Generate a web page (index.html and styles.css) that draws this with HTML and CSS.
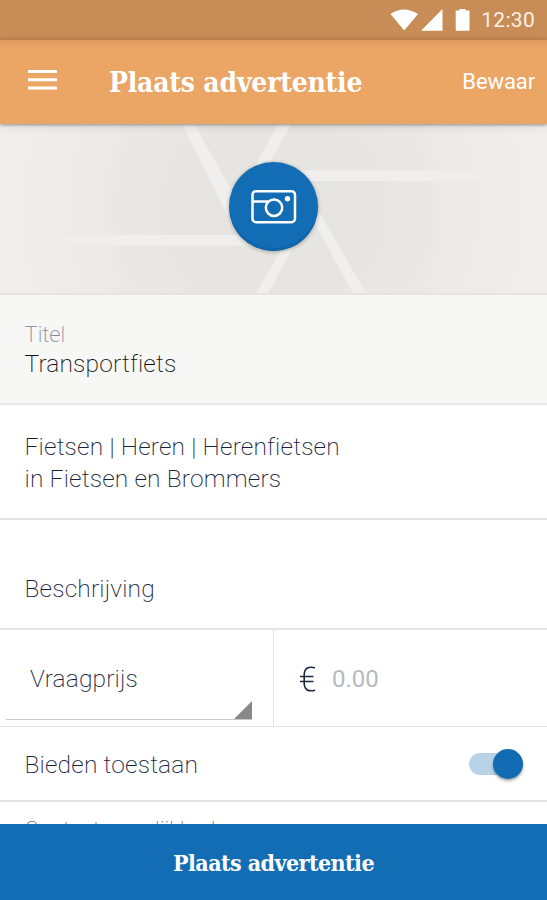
FILE: index.html
```html
<!DOCTYPE html>
<html lang="nl">
<head>
<meta charset="utf-8">
<title>Plaats advertentie</title>
<link rel="stylesheet" href="styles.css">
</head>
<body>
<div class="screen">
  <div class="status">
    <svg class="status-icons" width="82" height="24" viewBox="0 0 82 24">
      <path d="M.5 5Q13.800-4 28 5L14.200 21.500Z"/>
      <path d="M31 21.700L52.500 0V21.700Z"/>
      <path d="M65.700 1.400H69.500V0H75.500V1.400H79.500V21.700H65.700Z"/>
    </svg>
    <span class="clock">12:30</span>
  </div>
  <header class="bar">
    <svg class="burger" width="29" height="20" viewBox="0 0 29 20"><path d="M0 1.500H29M0 9.800H29M0 18.100H29"/></svg>
    <h1 class="slab bar-title">Plaats advertentie</h1>
    <span class="save">Bewaar</span>
  </header>
  <main class="form">
    <section class="photo">
      <svg class="roads" width="547" height="169" viewBox="0 0 547 169">
        <defs>
          <linearGradient id="left" gradientUnits="userSpaceOnUse" x1="10" x2="130"><stop offset="0" stop-color="#f0efed" stop-opacity="0"/><stop offset="1" stop-color="#f0efed"/></linearGradient>
          <linearGradient id="right" gradientUnits="userSpaceOnUse" x1="420" x2="530"><stop offset="0" stop-color="#f0efed"/><stop offset="1" stop-color="#f0efed" stop-opacity="0"/></linearGradient>
        </defs>
        <path fill="#f0efed" d="M182 0H194L240 81L228 93ZM278 0H291L268 42L254 44ZM311 92L319 88L366 169H353ZM280 128L293 124L268 169H256Z"/>
        <path fill="url(#left)" d="M0 111H255V121.500H0Z"/>
        <path fill="url(#right)" d="M290 46.500H547V57H290Z"/>
      </svg>
      <div class="camera">
        <svg width="46" height="36" viewBox="0 0 46 36" fill="none" stroke="#fff" stroke-width="2.500">
          <rect x="1.500" y="2.200" width="42.500" height="31" rx="3.500"/>
          <path d="M2 12.500H17"/><circle cx="23" cy="18.700" r="8.200"/>
          <circle cx="36.500" cy="9.800" r="2.700" fill="#fff" stroke="none"/>
        </svg>
      </div>
    </section>
    <section class="row title-row">
      <span class="label">Titel</span>
      <span class="value">Transportfiets</span>
    </section>
    <section class="row category">
      <span class="line1">Fietsen | Heren | Herenfietsen</span>
      <span class="line2">in Fietsen en Brommers</span>
    </section>
    <section class="row description"><span class="desc-text">Beschrijving</span></section>
    <section class="row price">
      <div class="kind">
        <div class="select"><span class="kind-text">Vraagprijs</span><svg class="corner" width="18" height="18" viewBox="0 0 18 18"><path d="M18 0V18H0Z"/></svg></div>
      </div>
      <div class="amount">
        <svg class="euro" width="16" height="26" viewBox="0 0 16 26"><path d="M15 1.800C8 0 4.200 2.500 4.200 9V17C4.200 23.500 8 26 15 24.200M0 10.500H13.500M0 15.500H13.500"/></svg>
        <span class="zero">0.00</span>
      </div>
    </section>
    <section class="row bids"><span class="bids-text">Bieden toestaan</span><div class="switch"><div class="knob"></div></div></section>
    <section class="contact"><span>Contactmogelijkheden</span></section>
  </main>
  <footer class="submit"><span class="slab submit-text">Plaats advertentie</span></footer>
</div>
</body>
</html>
```
FILE: styles.css
```css
* { box-sizing: border-box; }
body { margin: 0; }
.screen {
  width: 547px; height: 900px; overflow: hidden;
  display: flex; flex-direction: column;
  background: #fff; color: #16213a;
  font-family: Roboto, sans-serif; font-weight: 200; font-size: 24.5px;
  letter-spacing: .17px;
  font-variant-ligatures: none;
}
svg { display: block; flex: none; }
span { white-space: nowrap; }
.status {
  height: 39px; flex: none; padding: 0 12px 0 0;
  display: flex; justify-content: flex-end; align-items: center;
  background: #c88c56; color: #fff;
}
.status-icons { fill: #fff; margin-right: 9px; margin-top: 2px; overflow: visible; }
.clock { font-size: 21px; font-weight: 400; color: #fbf0e7; letter-spacing: .3px; }
.bar {
  height: 85px; flex: none; padding: 0 12px 0 28px; z-index: 1;
  display: flex; align-items: center;
  background: linear-gradient(#dd9a60, #eba565 9px);
  border-top: 1px solid #b98250;
  box-shadow: 0 1px 3px rgba(0,0,0,.35), 0 3px 9px rgba(0,0,0,.08);
  color: #fff;
}
.burger { stroke: #fff; stroke-width: 3; margin-top: -4px; }
.slab { font-family: "DejaVu Serif", serif; font-weight: 700; font-stretch: condensed; margin: 0; color: #fff; white-space: nowrap; }
.bar-title { font-size: 28px; margin-left: 52px; letter-spacing: -.2px; width: 260px; }
.save { margin-left: auto; font-size: 22px; font-weight: 400; letter-spacing: -.1px; position: relative; top: -1px; }
.form { flex: 1; min-height: 0; overflow: hidden; }
.photo {
  height: 171px; display: grid; place-items: center;
  background: radial-gradient(circle at 50% 50%, #e6e5e1 90px, #f0efed 275px);
  border-bottom: 2px solid #e5e4e1;
}
.photo > * { grid-area: 1 / 1; }
.camera {
  width: 89px; height: 89px; border-radius: 50%; margin-top: -4px;
  display: grid; place-items: center; background: #126db5;
  box-shadow: inset 0 -3px 0 #0f64aa, 0 1px 4px rgba(0,0,0,.3);
}
.row { border-bottom: 2px solid #e5e5e5; padding-left: 24.5px; display: flex; }
.title-row { height: 110px; background: #f7f7f5; flex-direction: column; padding-top: 26px; }
.label { font-size: 22px; line-height: 27px; color: #8088a0; letter-spacing: 0; }
.value { color: #111; line-height: 32px; }
.category { height: 115px; flex-direction: column; padding-top: 26px; line-height: 32px; }
.description { height: 110px; align-items: flex-end; line-height: 30px; padding-bottom: 24px; }
.price { height: 97px; padding-left: 0; border-bottom-width: 1px; }
.kind { width: 274px; border-right: 1px solid #e5e5e5; padding: 33px 21px 6px 6px; }
.select { height: 57px; border-bottom: 1px solid #c8c8c8; padding-left: 24px; line-height: 31px; display: flex; justify-content: space-between; }
.corner { fill: #888; align-self: flex-end; }
.amount { flex: 1; display: flex; align-items: center; padding-left: 26px; padding-top: 2px; }
.euro { fill: none; stroke: #1c2740; stroke-width: 1.6; }
.zero { margin-left: 16px; color: #b5bac1; font-weight: 400; font-size: 24px; letter-spacing: 0; }
.bids { height: 75px; align-items: center; justify-content: space-between; padding-right: 24px; padding-top: 2px; }
.switch { width: 54px; height: 22px; border-radius: 11px; background: #b8d3e8; display: flex; justify-content: flex-end; align-items: center; margin-top: -1px; }
.knob { width: 30px; height: 30px; border-radius: 50%; background: #116cb4; flex: none; box-shadow: 0 2px 3px rgba(0,0,0,.35); }
.contact { padding: 15px 24.5px 0; font-size: 22px; line-height: 26px; letter-spacing: 0; color: #6f7787; }
.submit { height: 76px; flex: none; background: #126db5; display: flex; align-items: center; justify-content: center; }
.submit-text { font-size: 23px; letter-spacing: -.55px; }
```
